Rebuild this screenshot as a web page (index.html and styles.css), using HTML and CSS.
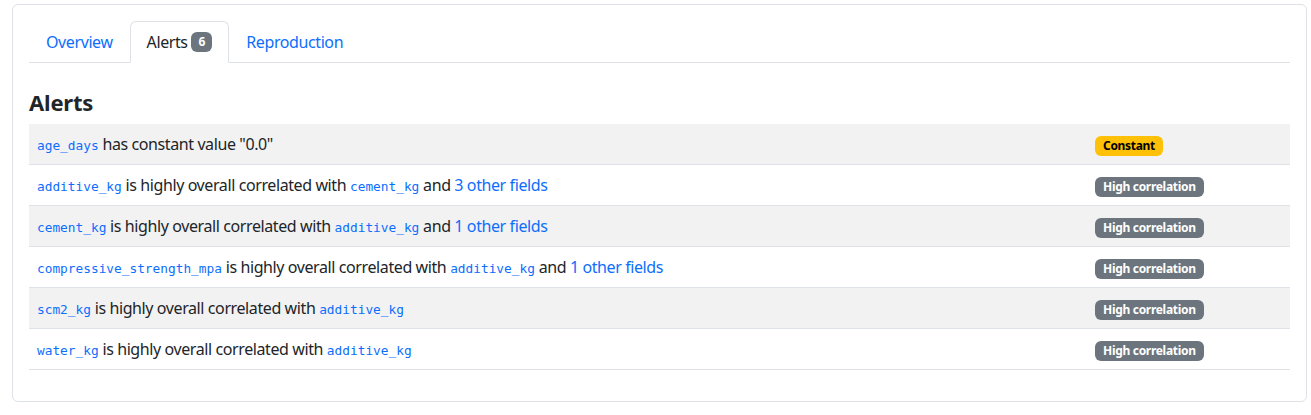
FILE: index.html
```html
<!DOCTYPE html>
<html lang="en">
<head>
<meta charset="utf-8">
<title>Alerts</title>
<link rel="stylesheet" href="styles.css">
</head>
<body>
<div class="card">
  <div class="card-body">
    <ul class="nav-tabs">
      <li><a class="nav-link" href="#">Overview</a></li>
      <li><a class="nav-link active" href="#">Alerts <span class="badge badge-secondary badge-tab">6</span></a></li>
      <li><a class="nav-link" href="#">Reproduction</a></li>
    </ul>
    <h4 class="title">Alerts</h4>
    <table class="alerts">
      <tbody>
        <tr class="odd">
          <td class="msg"><a href="#"><code>age_days</code></a> has constant value "0.0"</td>
          <td class="tag"><span class="badge badge-warning">Constant</span></td>
        </tr>
        <tr>
          <td class="msg"><a href="#"><code>additive_kg</code></a> is highly overall correlated with <a href="#"><code>cement_kg</code></a> and <a href="#">3 other fields</a></td>
          <td class="tag"><span class="badge badge-secondary">High correlation</span></td>
        </tr>
        <tr class="odd">
          <td class="msg"><a href="#"><code>cement_kg</code></a> is highly overall correlated with <a href="#"><code>additive_kg</code></a> and <a href="#">1 other fields</a></td>
          <td class="tag"><span class="badge badge-secondary">High correlation</span></td>
        </tr>
        <tr>
          <td class="msg"><a href="#"><code>compressive_strength_mpa</code></a> is highly overall correlated with <a href="#"><code>additive_kg</code></a> and <a href="#">1 other fields</a></td>
          <td class="tag"><span class="badge badge-secondary">High correlation</span></td>
        </tr>
        <tr class="odd">
          <td class="msg"><a href="#"><code>scm2_kg</code></a> is highly overall correlated with <a href="#"><code>additive_kg</code></a></td>
          <td class="tag"><span class="badge badge-secondary">High correlation</span></td>
        </tr>
        <tr>
          <td class="msg"><a href="#"><code>water_kg</code></a> is highly overall correlated with <a href="#"><code>additive_kg</code></a></td>
          <td class="tag"><span class="badge badge-secondary">High correlation</span></td>
        </tr>
      </tbody>
    </table>
  </div>
</div>
</body>
</html>
```

FILE: styles.css
```css
* { box-sizing: border-box; }
html, body { margin: 0; padding: 0; background: #fff; }
body {
  font-family: "Noto Sans", "Open Sans", sans-serif;
  font-size: 16px;
  line-height: 1.5;
  letter-spacing: -0.4px;
  color: #212529;
  padding: 4px 4px 13px 12px;
}
a { color: #0d6efd; text-decoration: none; }
.card {
  border: 1px solid #dee2e6;
  border-radius: 6px;
  height: 398px;
}
.card-body { padding: 16px; }
.nav-tabs {
  list-style: none;
  margin: 0;
  padding: 0;
  display: flex;
  border-bottom: 1px solid #dee2e6;
}
.nav-tabs li { margin-bottom: -1px; }
.nav-link {
  display: block;
  padding: 8px 16px;
  border: 1px solid transparent;
  border-top-left-radius: 6px;
  border-top-right-radius: 6px;
  line-height: 24px;
}
.nav-link.active {
  color: #212529;
  background: #fff;
  border-color: #dee2e6 #dee2e6 #fff;
}
.badge {
  display: inline-block;
  font-size: 12px;
  font-weight: 700;
  line-height: 1;
  letter-spacing: -0.3px;
  padding: 4px 8px;
  border-radius: 6px;
  white-space: nowrap;
  vertical-align: middle;
}
.badge-secondary { background: #6c757d; color: #fff; }
.badge-warning { background: #ffc107; color: #000; }
.badge-tab { padding: 4px 7px; position: relative; top: -2px; letter-spacing: 0; }
.title {
  font-size: 22px;
  font-weight: 700;
  line-height: 1.2;
  margin: 26px 0 9px 0;
  letter-spacing: -0.2px;
}
.alerts {
  width: 100%;
  border-collapse: collapse;
}
.alerts td {
  padding: 8px;
  border-bottom: 1px solid #dee2e6;
  line-height: 24px;
  vertical-align: middle;
}
.alerts tr.odd td { background: #f2f2f2; }
.alerts td.msg { width: 1058px; }
code {
  font-family: "DejaVu Sans Mono", "Liberation Mono", monospace;
  font-size: 12.8px;
  line-height: 1;
  letter-spacing: 0;
  color: #0d6efd;
}
```
